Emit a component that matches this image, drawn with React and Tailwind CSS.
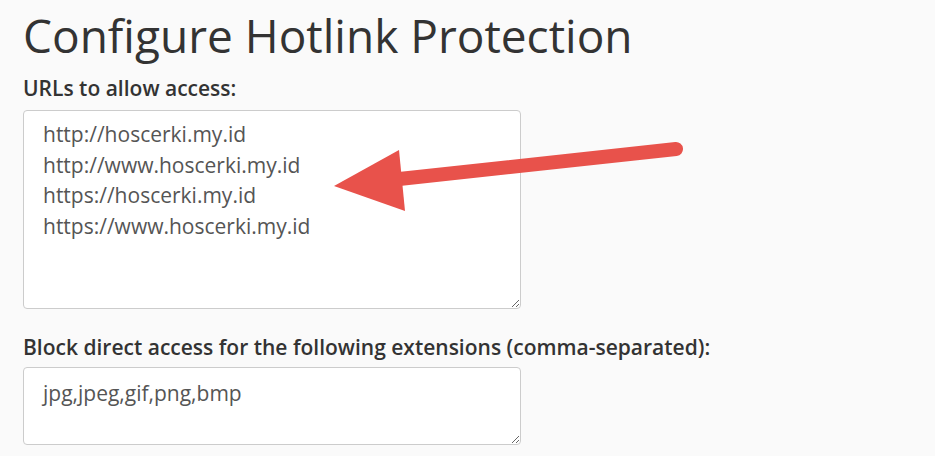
import React from "react";

function Arrow() {
  return (
    <svg className="absolute left-0 top-0" width="935" height="456" viewBox="0 0 935 456">
      <line x1="676" y1="149" x2="390" y2="180" stroke="#e8524b" strokeWidth="14" strokeLinecap="round" />
      <polygon points="334,186 399,150 405,211" fill="#e8524b" />
    </svg>
  );
}

export default function App() {
  return (
    <div
      className="relative w-[935px] h-[456px] overflow-hidden bg-[#fafafa] text-[#333]"
      style={{ fontFamily: '"Open Sans", sans-serif' }}
    >
      <div className="pl-[23px]">
        <h1 className="text-[46px] leading-[60px] pt-[5px] font-normal">Configure Hotlink Protection</h1>
        <label className="block mt-[10px] text-[21px] leading-[26px] font-semibold">URLs to allow access:</label>
        <textarea
          readOnly
          className="block mt-[9px] w-[498px] h-[199px] bg-white border border-[#ccc] rounded-[4px] px-[19px] py-[8px] text-[21px] leading-[30.7px] text-[#555] outline-none"
          defaultValue={"http://hoscerki.my.id\nhttp://www.hoscerki.my.id\nhttps://hoscerki.my.id\nhttps://www.hoscerki.my.id"}
        />
        <label className="block mt-[25px] text-[21px] leading-[26px] font-semibold">
          Block direct access for the following extensions (comma-separated):
        </label>
        <textarea
          readOnly
          className="block mt-[7px] w-[498px] h-[78px] bg-white border border-[#ccc] rounded-[4px] px-[19px] py-[10px] text-[21px] leading-[30.7px] text-[#555] outline-none"
          defaultValue={"jpg,jpeg,gif,png,bmp"}
        />
      </div>
      <Arrow />
    </div>
  );
}
